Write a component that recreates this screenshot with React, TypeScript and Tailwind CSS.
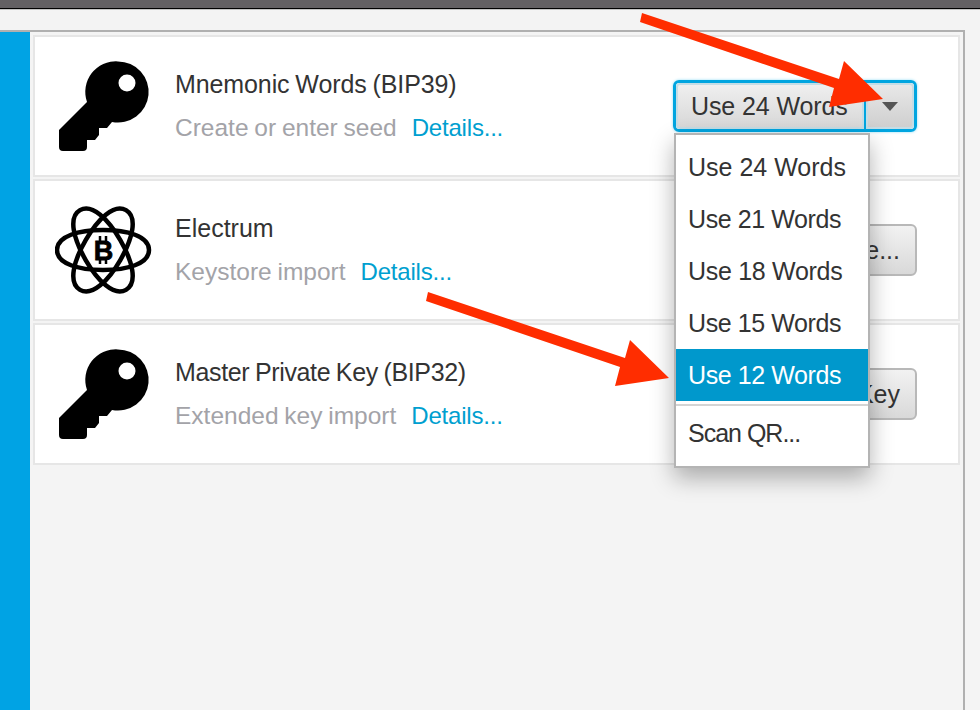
const uiFont = { fontFamily: '"Liberation Sans", Arial, sans-serif' };

function KeyIcon() {
  return (
    <svg viewBox="55 55 100 100" className="w-[100px] h-[100px] shrink-0 -mt-[2px]">
      <path
        fillRule="evenodd"
        d="M118 61.4a30.6 30.6 0 1 1 -6 60.6l-5 6h-8v7l-4 5h-8v7q0 4 -4 4h-20q-4 0 -4 -4v-17l28 -28a30.6 30.6 0 0 1 31 -40.600zM127 74.500a8.500 8.500 0 1 0 0 17a8.500 8.500 0 0 0 0 -17z"
        fill="#000"
      />
    </svg>
  );
}

const orbit = "M-46 0C-46 -14 -24 -20 0 -20C24 -20 46 -14 46 0C46 14 24 20 0 20C-24 20 -46 14 -46 0Z";

function ElectrumIcon() {
  return (
    <svg viewBox="55 55 100 100" className="w-[100px] h-[100px] shrink-0 -mt-[1px]">
      <g fill="none" stroke="#000" strokeWidth="4.500">
        <path d={orbit} transform="translate(103 105)" />
        <path d={orbit} transform="translate(103 105) rotate(60)" />
        <path d={orbit} transform="translate(103 105) rotate(120)" />
      </g>
      <path d="M100 91v5M106 91v5M100 114v5M106 114v5" stroke="#000" strokeWidth="2.500" />
      <text
        x="103.500"
        y="115"
        textAnchor="middle"
        fontSize="27"
        fontWeight="700"
        fill="#000"
        stroke="#000"
        strokeWidth="0.800"
        fontFamily="Liberation Sans, sans-serif"
      >
        B
      </text>
    </svg>
  );
}

function Card({
  icon,
  title,
  titleClass,
  subtitle,
  action,
}: {
  icon: React.ReactNode;
  title: string;
  titleClass: string;
  subtitle: string;
  action: React.ReactNode;
}) {
  return (
    <div className="h-[142px] bg-white border-2 border-[#e6e6e6] flex items-center pl-[20px] pr-[41px]">
      {icon}
      <div className="ml-[20px] flex flex-col gap-[18px] text-[25px] leading-[26px]">
        <div className={`text-[#333333] whitespace-nowrap ${titleClass}`}>{title}</div>
        <div className="text-[#a3a3a8] whitespace-nowrap text-[24.5px] [word-spacing:-1px]">
          {subtitle}
          <span className="ml-[15px] text-[#009fd0] text-[24px] tracking-[-0.2px]">Details...</span>
        </div>
      </div>
      <div className="ml-auto">{action}</div>
    </div>
  );
}

function PlainButton({ label }: { label: string }) {
  return (
    <div className="h-[52px] px-[15px] pt-[1px] flex items-center rounded-[6px] border-2 border-[#b8b8b8] bg-gradient-to-b from-[#f2f2f2] to-[#d9d9d9] text-[25px] text-[#333333] whitespace-nowrap">
      {label}
    </div>
  );
}

function SplitButton() {
  return (
    <div className="w-[244px] h-[52px] flex rounded-[6px] border-[3px] border-[#00a5e0] shadow-[0_0_3px_#8fdcf5]">
      <div className="w-[188px] flex items-center pl-[13px] pt-[1px] tracking-[-0.1px] bg-gradient-to-b from-[#efefef] to-[#d8d8d8] border-2 border-[#c4dde6] rounded-l-[4px] text-[25px] text-[#333333] whitespace-nowrap">
        Use 24 Words
      </div>
      <div className="w-[2px] bg-[#00a5e0]" />
      <div className="flex-1 flex items-center justify-center bg-gradient-to-b from-[#e8e8e8] to-[#cfcfcf] border-2 border-[#c4dde6] rounded-r-[4px]">
        <div className="w-0 h-0 border-l-[8px] border-r-[8px] border-t-[9px] border-l-transparent border-r-transparent border-t-[#555555]" />
      </div>
    </div>
  );
}

function MenuItem({ label, className }: { label: string; className?: string }) {
  return <div className={`h-[52px] flex items-center pl-[12px] pt-[2px] ${className ?? ""}`}>{label}</div>;
}

function DropdownMenu() {
  return (
    <div className="absolute left-[674px] top-[133px] w-[196px] h-[335px] bg-white border-2 border-[#b4b4b4] shadow-[0_10px_22px_rgba(0,0,0,0.3)] pt-[6px] text-[25px] text-[#333333]">
      <MenuItem label="Use 24 Words" />
      <MenuItem label="Use 21 Words" className="tracking-[-0.4px]" />
      <MenuItem label="Use 18 Words" className="tracking-[-0.3px]" />
      <MenuItem label="Use 15 Words" className="tracking-[-0.4px]" />
      <MenuItem label="Use 12 Words" className="tracking-[-0.4px] bg-[#0098cc] text-white" />
      <div className="h-[2px] mt-[3px] bg-[#d4d4d4]" />
      <MenuItem label="Scan QR..." className="tracking-[-1px] pt-[3px]" />
    </div>
  );
}

function Arrow({ className }: { className: string }) {
  return (
    <svg viewBox="0 0 246 96" className={className}>
      <polygon points="2,0 0,9 194,75 189,94 243,86 204,48 199,66" fill="#ff2d00" />
    </svg>
  );
}

export default function App() {
  return (
    <div className="relative w-[980px] h-[710px] overflow-hidden bg-[#f4f4f4] flex flex-col" style={uiFont}>
      <div className="h-[8px] bg-[#636063]" />
      <div className="h-[1px] bg-black" />
      <div className="h-[21px] border-t border-[#c4c4c4] bg-[#f3f3f3]" />
      <div className="flex-1 flex w-[965px] border-t-2 border-r-2 border-[#b0b0b0]">
        <div className="w-[30px] bg-[#00a3e4]" />
        <div className="flex-1 pt-[3px] pl-[3px] pr-[3px] flex flex-col gap-[2px] bg-[#f4f4f4]">
          <Card
            icon={<KeyIcon />}
            title="Mnemonic Words (BIP39)"
            titleClass="tracking-[-0.1px] [word-spacing:-1px]"
            subtitle="Create or enter seed"
            action={<SplitButton />}
          />
          <Card
            icon={<ElectrumIcon />}
            title="Electrum"
            titleClass=""
            subtitle="Keystore import"
            action={<PlainButton label="Import File..." />}
          />
          <Card
            icon={<KeyIcon />}
            title="Master Private Key (BIP32)"
            titleClass="tracking-[-0.35px] [word-spacing:-1px]"
            subtitle="Extended key import"
            action={<PlainButton label="Enter Private Key" />}
          />
        </div>
      </div>
      <DropdownMenu />
      <Arrow className="absolute left-[640px] top-[13px] w-[246px] h-[96px]" />
      <Arrow className="absolute left-[426px] top-[292px] w-[246px] h-[96px]" />
    </div>
  );
}
